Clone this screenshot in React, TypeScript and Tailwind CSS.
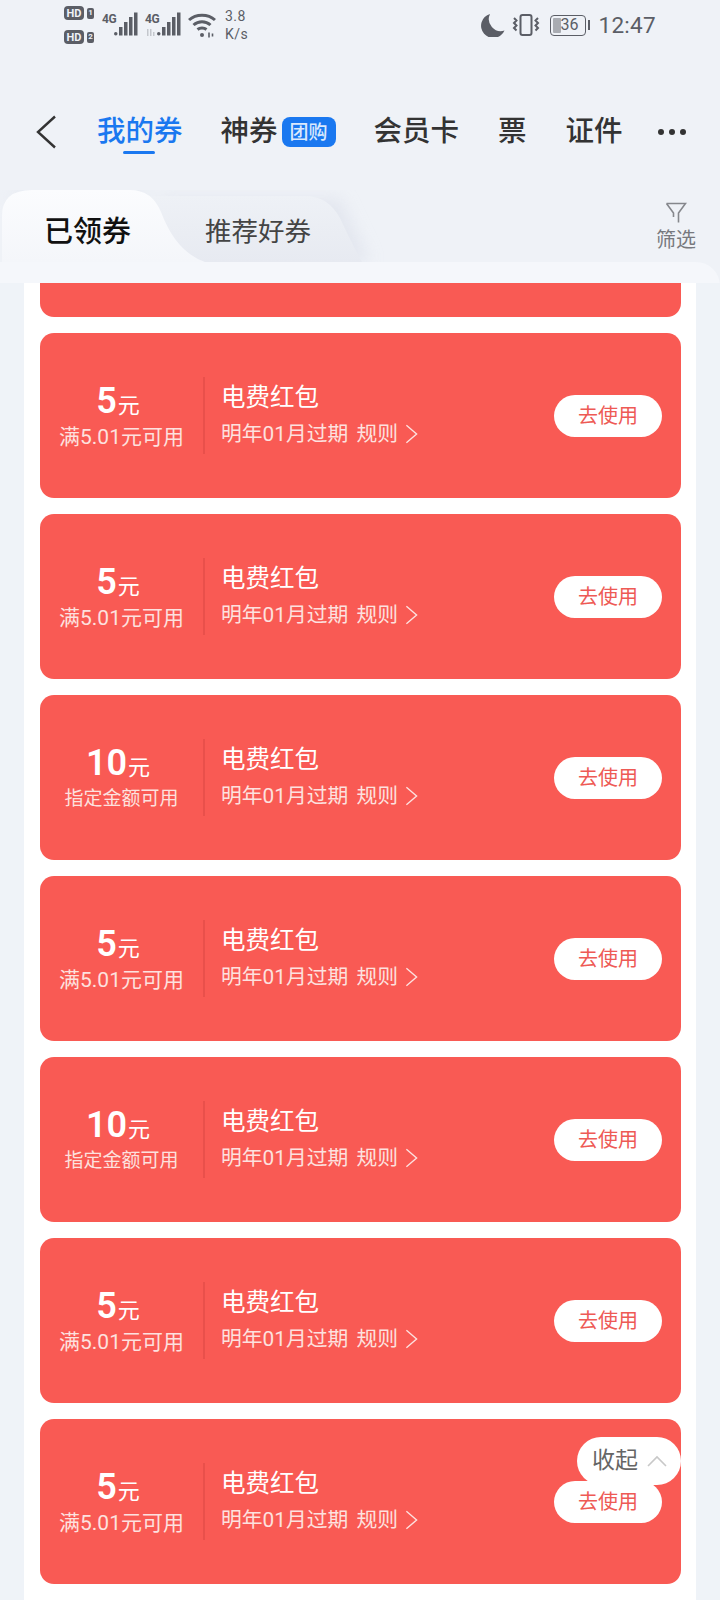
const coupons = [
  { amount: "5", rule: "满5.01元可用" },
  { amount: "5", rule: "满5.01元可用" },
  { amount: "10", rule: "指定金额可用" },
  { amount: "5", rule: "满5.01元可用" },
  { amount: "10", rule: "指定金额可用" },
  { amount: "5", rule: "满5.01元可用" },
  { amount: "5", rule: "满5.01元可用" },
];

function HdBadge({ n }: { n: string }) {
  return (
    <div className="flex items-center gap-[3px]">
      <span className="flex h-[14px] w-[20px] items-center justify-center rounded-[4px] bg-[#5b5e66] text-[11px] leading-none font-bold text-[#eff2f7]">
        HD
      </span>
      <span className="flex h-[11px] w-[7px] items-center justify-center rounded-[2px] bg-[#5b5e66] text-[8px] leading-none font-bold text-[#eff2f7]">
        {n}
      </span>
    </div>
  );
}

function Signal({ dim }: { dim?: boolean }) {
  return (
    <div className="relative h-[26px] w-[36px]">
      <span className="absolute top-[1px] left-0 text-[12px] leading-none font-bold tracking-[-0.5px] text-[#5b5e66]">4G</span>
      <svg viewBox="0 0 36 26" className="absolute inset-0 h-[26px] w-[36px]" fill="#5b5e66">
        {dim && <path d="M2 17h1.500v7H2zM5 17h1.500v7H5zM8 20h1.500v4H8z" fill="#c4c7cd" />}
        <rect x="12" y="20" width="3.500" height="3.500" rx="1.700" />
        <rect x="17" y="15" width="3.500" height="8.500" />
        <rect x="22" y="10" width="3.500" height="13.500" />
        <rect x="27" y="5" width="3.500" height="18.500" />
        <rect x="32" y="0.500" width="3.500" height="23" />
      </svg>
    </div>
  );
}

function StatusBar() {
  return (
    <div className="flex h-[50px] items-center justify-between pr-[64px] pl-[64px] text-[#5b5e66]">
      <div className="flex items-center">
        <div className="flex flex-col gap-[10px]">
          <HdBadge n="1" />
          <HdBadge n="2" />
        </div>
        <div className="ml-[8px]">
          <Signal />
        </div>
        <div className="ml-[7px]">
          <Signal dim />
        </div>
        <svg viewBox="0 0 28 26" className="ml-[7px] h-[26px] w-[28px]" fill="none" stroke="#5b5e66" strokeWidth="3">
          <path d="M1 8c7-6.500 19-6.500 26 0" />
          <path d="M5.500 13c5-4.500 12-4.500 17 0" />
          <path d="M9.500 17.500c2.500-2 6.500-2 9 0" />
          <circle cx="14" cy="23" r="2" fill="#5b5e66" stroke="none" />
          <path d="M21 20.500v5M24.500 21.500v3" strokeWidth="1.600" />
        </svg>
        <div className="ml-[9px] flex flex-col text-[14px] leading-[18px] tracking-[0.5px]">
          <span>3.8</span>
          <span>K/s</span>
        </div>
      </div>
      <div className="flex items-center">
        <svg viewBox="0 0 24 24" className="h-[24px] w-[24px]" fill="#5b5e66">
          <path d="M9 1A12 12 0 0 0 23.500 17.500 12.200 12.200 0 1 1 9 1Z" />
        </svg>
        <svg viewBox="0 0 30 24" className="ml-[6px] h-[24px] w-[30px]" fill="none" stroke="#5b5e66" strokeWidth="2">
          <rect x="9.500" y="2" width="11" height="20" rx="2" />
          <path d="M3 5l2.500 2.500L3 10l2.500 2.500L3 15l2.500 2.500M27 5l-2.500 2.500L27 10l-2.500 2.500L27 15l-2.500 2.500" />
        </svg>
        <div className="ml-[9px] flex items-center">
          <div className="relative flex h-[21px] w-[36px] items-center justify-center overflow-hidden rounded-[4px] border-[1.500px] border-[#5b5e66] pl-[2px] text-[16px] leading-none">
            <span className="absolute top-[2px] bottom-[2px] left-[2px] w-[8px] rounded-[1px] bg-[#a9acb2]" />
            <span className="relative">36</span>
          </div>
          <span className="ml-[2px] h-[10px] w-[2px] bg-[#5b5e66]" />
        </div>
        <span className="ml-[8px] text-[22.500px] leading-none tracking-[0.3px]">12:47</span>
      </div>
    </div>
  );
}

function NavBar() {
  return (
    <div className="mt-[48px] flex h-[68px] items-center text-[28.500px] leading-none font-medium text-[#333333]">
      <svg viewBox="0 0 22 34" className="ml-[35px] h-[34px] w-[22px] shrink-0" fill="none" stroke="#333333" strokeWidth="2.400">
        <path d="M20 1.500 3 17l17 15.500" />
      </svg>
      <div className="relative ml-[40px] text-[#1a78f0]">
        我的券
        <span className="absolute top-[33px] left-[26px] h-[3px] w-[32px] rounded-full bg-[#1a78f0]" />
      </div>
      <span className="ml-[38px]">神券</span>
      <span className="ml-[4px] flex h-[30px] w-[54px] items-center justify-center rounded-[8px] bg-[#1a78f0] text-[19px] text-[#dbe9fc]">
        团购
      </span>
      <span className="ml-[38px]">会员卡</span>
      <span className="ml-[39px]">票</span>
      <span className="ml-[39px]">证件</span>
      <div className="ml-[35px] flex gap-[5px]">
        <span className="h-[6px] w-[6px] rounded-full bg-[#333333]" />
        <span className="h-[6px] w-[6px] rounded-full bg-[#333333]" />
        <span className="h-[6px] w-[6px] rounded-full bg-[#333333]" />
      </div>
    </div>
  );
}

function TabHeader() {
  return (
    <div className="relative mt-[24px] h-[72px]">
      <svg viewBox="0 0 720 72" className="absolute inset-0 h-[72px] w-[720px]">
        <defs>
          <linearGradient id="activeTab" x1="0" y1="0" x2="0" y2="1">
            <stop offset="0" stopColor="#fbfcfe" />
            <stop offset="1" stopColor="#f4f6fa" />
          </linearGradient>
          <linearGradient id="otherTab" x1="0" y1="0" x2="0" y2="1">
            <stop offset="0" stopColor="#eef1f6" />
            <stop offset="1" stopColor="#e7eaf1" />
          </linearGradient>
          <filter id="tabShade" x="-10%" y="-40%" width="120%" height="160%">
            <feGaussianBlur stdDeviation="8" />
          </filter>
        </defs>
        <path d="M0 72V22Q0 0 30 0H130Q156 0 166 25Q180 62 205 72H370L340 8H0Z" fill="#d9dde8" opacity="0.55" filter="url(#tabShade)" />
        <path d="M150 6H305Q328 6 340 28Q350 50 362 72H150Z" fill="url(#otherTab)" />
        <path d="M2 72V26Q2 0 32 0H130Q152 0 161 22Q176 62 205 72Z" fill="url(#activeTab)" />
      </svg>
      <div className="relative flex h-full items-center pt-[12px]">
        <span className="ml-[44px] text-[29px] leading-none font-medium text-[#111111]">已领券</span>
        <span className="ml-[74px] text-[26.500px] leading-none text-[#444444]">推荐好券</span>
      </div>
      <div className="absolute top-[12px] right-[24px] flex w-[40px] flex-col items-center text-[20px] leading-[24px] text-[#77797e]">
        <svg viewBox="0 0 22 22" className="h-[22px] w-[22px]" fill="none" stroke="#85878c" strokeWidth="1.600">
          <path d="M1.500 1.500h19l-7 9.500v9.500M8.500 15V11l-7-9.500" />
        </svg>
        <span className="mt-[4px]">筛选</span>
      </div>
    </div>
  );
}

function CouponCard({ amount, rule }: { amount: string; rule: string }) {
  return (
    <div className="flex h-[165px] items-center rounded-[14px] bg-[#f95a54] text-white">
      <div className="flex h-[77px] w-[165px] shrink-0 flex-col items-center border-r-[2px] border-[#e9504b] pt-[6px]">
        <div className="-ml-[7px] flex h-[36px] items-baseline justify-center leading-none">
          <span className="text-[36px] font-semibold">{amount}</span>
          <span className="ml-[1px] text-[22px]">元</span>
        </div>
        <span className={rule.startsWith("满") ? "mt-[6px] text-[21px] leading-[24px] text-[#fde1df]" : "mt-[6px] text-[19px] leading-[24px] text-[#fde1df]"}>
          {rule}
        </span>
      </div>
      <div className="ml-[16px] flex -translate-y-[1px] flex-col">
        <span className="text-[24.500px] leading-[30px]">电费红包</span>
        <div className="mt-[8px] flex items-center text-[20.800px] leading-[26px] text-[#fde1df]">
          <span>明年01月过期</span>
          <span className="ml-[8px]">规则</span>
          <svg viewBox="0 0 14 22" className="ml-[7px] h-[22px] w-[13px]" fill="none" stroke="#fde1df" strokeWidth="1.500">
            <path d="M1.500 1.500 12.500 11 1.500 20.500" />
          </svg>
        </div>
      </div>
      <button
        type="button"
        className="mr-[19px] ml-auto flex h-[42px] w-[108px] items-center justify-center rounded-full bg-white text-[20px] text-[#ee5a55]"
      >
        去使用
      </button>
    </div>
  );
}

export default function App() {
  return (
    <div className="relative h-[1600px] w-[720px] overflow-hidden bg-[#eff2f7] font-['Roboto','Noto_Sans_CJK_SC',sans-serif]">
      <StatusBar />
      <NavBar />
      <TabHeader />
      <div className="h-full rounded-tr-[24px] bg-[linear-gradient(#f5f7fb_0,#f5f7fb_21px,#eff3f8_21px)] px-[24px] pt-[21px]">
        <div className="flex h-full flex-col gap-[16px] bg-white px-[16px] pr-[15px]">
          <div className="h-[34px] shrink-0 rounded-b-[14px] bg-[#f95a54]" />
          {coupons.map((coupon, i) => (
            <CouponCard key={i} amount={coupon.amount} rule={coupon.rule} />
          ))}
        </div>
      </div>
      <div className="absolute top-[1437px] left-[577px] flex h-[48px] w-[104px] items-center rounded-full bg-white pl-[15px] text-[23px] text-[#666666]">
        收起
        <svg viewBox="0 0 20 12" className="ml-[9px] h-[12px] w-[20px]" fill="none" stroke="#c8c8c8" strokeWidth="1.600">
          <path d="M1 11 10 2l9 9" />
        </svg>
      </div>
    </div>
  );
}
